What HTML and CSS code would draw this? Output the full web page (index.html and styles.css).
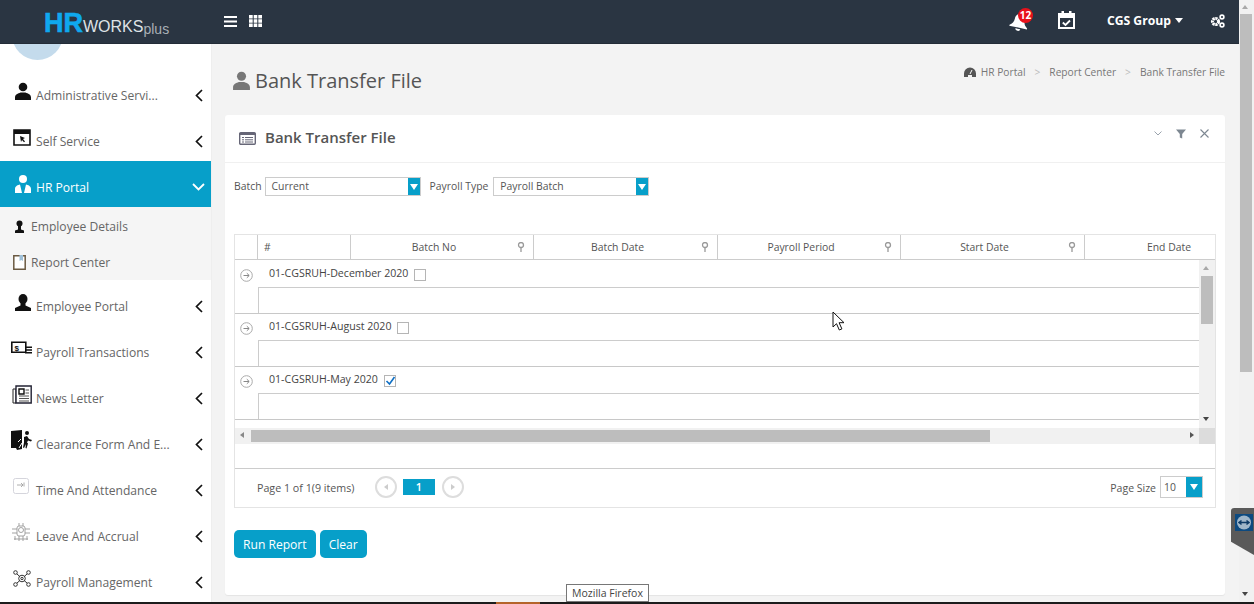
FILE: index.html
```html
<!DOCTYPE html>
<html lang="en">
<head>
    <meta charset="UTF-8">
    <meta name="viewport" content="width=device-width, initial-scale=1.0">
    <title>Bank Transfer File</title>
    <link rel="stylesheet" href="styles.css">
</head>
<body>
<svg class="defs" width="0" height="0">
    <symbol id="chev-left" viewBox="0 0 8 13"><path d="M7 1 1.5 6.5 7 12" fill="none" stroke="currentColor" stroke-width="1.7"/></symbol>
    <symbol id="person" viewBox="0 0 16 18"><circle cx="8" cy="5" r="4.3"/><path d="M0 18v-2.500c0-3 3-4 5.500-5h5c2.500 1 5.500 2 5.500 5V18z"/></symbol>
    <symbol id="pin" viewBox="0 0 8 10"><circle cx="4" cy="3" r="2.5" fill="none" stroke="currentColor" stroke-width="1.3"/><path d="M4 5.500V10" stroke="currentColor" stroke-width="1.3"/></symbol>
    <symbol id="expand" viewBox="0 0 13 13"><circle cx="6.5" cy="6.5" r="5.8" fill="none" stroke="#aaa" stroke-width="1"/><path d="M3.500 6.500h5.500M6.800 4.200l2.400 2.300-2.400 2.300" fill="none" stroke="#888" stroke-width="1"/></symbol>
    <symbol id="funnel" viewBox="0 0 10 10"><path d="M0 .5h10L6.200 5v4.500l-2.400-1V5z"/></symbol>
</svg>

<div class="shell">
    <div class="app">
        <header class="topbar">
            <div class="logo"><span class="logo-hr">HR</span><span class="logo-works">WORKS</span><span class="logo-plus">plus</span></div>
            <svg class="top-icon" width="13" height="11" viewBox="0 0 13 11"><path d="M0 1h13M0 5.500h13M0 10h13" stroke="#fff" stroke-width="2"/></svg>
            <svg class="top-icon grid-icon" width="13" height="12" viewBox="0 0 13 12" fill="#fff"><path d="M0 0h3.700v3.500H0zM4.700 0h3.600v3.500H4.700zM9.300 0H13v3.500H9.300zM0 4.300h3.700v3.400H0zM4.700 4.300h3.600v3.400H4.700zM9.300 4.300H13v3.400H9.300zM0 8.500h3.700V12H0zM4.700 8.500h3.600V12H4.700zM9.300 8.500H13V12H9.300z"/></svg>
            <div class="top-right">
                <div class="bell">
                    <svg width="21" height="20" viewBox="0 0 20 20" fill="#fff"><path transform="rotate(12 10 10)" d="M10 3c-3.500 0-5 2.800-5 5.500 0 3.500-1.500 5.500-4 7.200v1h18v-1c-2.500-1.700-4-3.700-4-7.200C15 5.800 13.500 3 10 3zM7.500 18a2.500 2 0 0 0 5 0z"/></svg>
                    <span class="badge">12</span>
                </div>
                <svg class="calendar" width="17" height="18" viewBox="0 0 17 18"><path d="M1 3h15v14H1z" fill="none" stroke="#fff" stroke-width="2"/><path d="M1 3h15v4H1zM3.500 0h2.500v4H3.500zM11 0h2.500v4H11z" fill="#fff"/><path d="m4.800 11.500 2.700 2.500 4.500-4.500" fill="none" stroke="#fff" stroke-width="1.8"/></svg>
                <span class="org">CGS Group<i class="caret"></i></span>
                <svg class="gears" width="15" height="14" viewBox="0 0 15 14"><circle cx="5.5" cy="7.5" r="3.1" fill="none" stroke="#fff" stroke-width="3" stroke-dasharray="2.2 .6"/><circle cx="12" cy="3" r="1.9" fill="none" stroke="#fff" stroke-width="1.6"/><circle cx="12" cy="11" r="1.9" fill="none" stroke="#fff" stroke-width="1.6"/></svg>
            </div>
        </header>

        <div class="body-row">
            <nav class="sidebar">
                <div class="avatar-clip"><div class="avatar"></div></div>
                <a class="nav-item">
                    <svg class="nav-icon" width="16" height="18" fill="#111"><use href="#person"/></svg>
                    <span class="nav-text">Administrative Servi...</span>
                    <svg class="chev" width="8" height="13"><use href="#chev-left"/></svg>
                </a>
                <a class="nav-item">
                    <svg class="nav-icon shift-2" width="18" height="17" viewBox="0 0 18 17"><path d="M1 1h16v15H1z" fill="#fff" stroke="#111" stroke-width="1.6"/><path d="M1 1h16v4H1z" fill="#111"/><path d="m7 7 5 2-2 1 2 2.500-1 .8L9 11l-1 2z" fill="#111"/></svg>
                    <span class="nav-text">Self Service</span>
                    <svg class="chev" width="8" height="13"><use href="#chev-left"/></svg>
                </a>
                <a class="nav-item active">
                    <svg class="nav-icon" width="16" height="19" viewBox="0 0 16 19" fill="#fff"><circle cx="8" cy="5" r="4"/><path d="M0 19v-4c0-3 3-4 5-4.500L7 19zM16 19v-4c0-3-3-4-5-4.500L9 19z"/></svg>
                    <span class="nav-text">HR Portal</span>
                    <svg class="chev-down" width="13" height="8" viewBox="0 0 13 8"><path d="m1 1 5.500 5.500L12 1" fill="none" stroke="#fff" stroke-width="1.8"/></svg>
                </a>
                <div class="sub-nav">
                    <a class="sub-item">
                        <svg class="sub-icon" width="10" height="13" viewBox="0 0 10 13" fill="#111"><circle cx="5" cy="3.5" r="3"/><path d="M3.500 6h3v3.500l3 1V13H.5v-2.500l3-1z"/></svg>
                        <span>Employee Details</span>
                    </a>
                    <a class="sub-item">
                        <svg class="sub-icon" width="13" height="15" viewBox="0 0 13 15"><path d="M.8.800h11.400v13.400H.8z" fill="#fff" stroke="#6b5a42" stroke-width="1.5"/><path d="M6.500 0h3.500v6l-1.700-1-1.800 1z" fill="#9fc0d8"/></svg>
                        <span>Report Center</span>
                    </a>
                </div>
                <a class="nav-item">
                    <svg class="nav-icon" width="16" height="17" viewBox="0 0 16 17" fill="#111"><ellipse cx="8" cy="5" rx="4.5" ry="5"/><path d="M5.500 9h5v2.500l5.500 2.500v3H0v-3l5.500-2.500z"/></svg>
                    <span class="nav-text">Employee Portal</span>
                    <svg class="chev" width="8" height="13"><use href="#chev-left"/></svg>
                </a>
                <a class="nav-item">
                    <svg class="nav-icon shift-4" width="21" height="14" viewBox="0 0 21 13"><path d="M.8.800h14v10H.8z" fill="#fff" stroke="#111" stroke-width="1.6"/><path d="M14 5h7v1.500h-7zM14 7.700h7v1.500h-7zM14 10.400h7V12H14z" fill="#111"/><text x="3.500" y="9" font-size="8" font-weight="700" fill="#111" font-family="Liberation Sans, sans-serif">$</text></svg>
                    <span class="nav-text">Payroll Transactions</span>
                    <svg class="chev" width="8" height="13"><use href="#chev-left"/></svg>
                </a>
                <a class="nav-item">
                    <svg class="nav-icon shift-3" width="20" height="19" viewBox="0 0 20 19"><path d="M1 4h3v14H1z" fill="#fff" stroke="#222" stroke-width="1"/><path d="M4 1h15.200v17H4z" fill="#fff" stroke="#223" stroke-width="1.4"/><path d="M7 4h5v5H7z" fill="none" stroke="#111" stroke-width="1.4"/><path d="M13.500 5H17M13.500 8H17M7 11h10M7 13.500h10M7 16h10" stroke="#555" stroke-width="1.2"/></svg>
                    <span class="nav-text">News Letter</span>
                    <svg class="chev" width="8" height="13"><use href="#chev-left"/></svg>
                </a>
                <a class="nav-item">
                    <svg class="nav-icon shift-4" width="21" height="20" viewBox="0 0 21 20"><path d="M0 1 11 0v19l-5 1-1-2H0z" fill="#111"/><circle cx="16" cy="3" r="2" fill="#111"/><path d="m13 7 3-1 2 3 3 1-1 1.500-3-1-1 2 1 1-1.500 5-1-.5.500-4-2 4-1-.5 1-5z" fill="#111"/><path d="M7 12l3-3M8 18l3-5" stroke="#fff" stroke-width="1"/></svg>
                    <span class="nav-text">Clearance Form And E...</span>
                    <svg class="chev" width="8" height="13"><use href="#chev-left"/></svg>
                </a>
                <a class="nav-item">
                    <svg class="nav-icon shift-2" width="16" height="16" viewBox="0 0 16 16"><rect x=".5" y=".5" width="15" height="15" rx="2" fill="none" stroke="#d5d5dc"/><path d="M4 7h6M8 5l2 2-2 2M11 4.500v4" fill="none" stroke="#999" stroke-width=".8"/></svg>
                    <span class="nav-text">Time And Attendance</span>
                    <svg class="chev" width="8" height="13"><use href="#chev-left"/></svg>
                </a>
                <a class="nav-item">
                    <svg class="nav-icon shift-3" width="18" height="18" viewBox="0 0 18 18" fill="none" stroke="#999" stroke-width=".9"><rect x="5" y="3" width="8" height="10" rx="2"/><circle cx="9" cy="7" r="2.5"/><path d="M7 0v3M11 0v3M0 6h5M13 6h5M0 10h5M13 10h5M3 13v4M7 13v5M11 13v5M15 13v4M2 16h14"/></svg>
                    <span class="nav-text">Leave And Accrual</span>
                    <svg class="chev" width="8" height="13"><use href="#chev-left"/></svg>
                </a>
                <a class="nav-item">
                    <svg class="nav-icon shift-2" width="18" height="17" viewBox="0 0 18 17" fill="none" stroke="#333" stroke-width="1"><circle cx="2.5" cy="2.5" r="1.8"/><circle cx="15.5" cy="2.5" r="1.8"/><circle cx="2.5" cy="14.5" r="1.8"/><circle cx="15.5" cy="14.5" r="1.8"/><circle cx="9" cy="8.5" r="3.3"/><circle cx="9" cy="8.5" r="1.2"/><path d="m4 4 2.700 2.500M14 4l-2.700 2.500M4 13l2.700-2.300M14 13l-2.700-2.300"/></svg>
                    <span class="nav-text">Payroll Management</span>
                    <svg class="chev" width="8" height="13"><use href="#chev-left"/></svg>
                </a>
            </nav>

            <main class="content">
                <div class="page-head">
                    <h1 class="page-title">
                        <svg width="17" height="19" fill="#777"><use href="#person"/></svg>
                        Bank Transfer File
                    </h1>
                    <div class="breadcrumb">
                        <svg width="12" height="10" viewBox="0 0 12 10"><path d="M0 10V6.500a6 6 0 0 1 12 0V10H8V8H4v2z" fill="#555"/><path d="M6 7 8 3" stroke="#fff" stroke-width="1"/></svg>
                        <span>HR Portal</span><i>&gt;</i><span>Report Center</span><i>&gt;</i><span>Bank Transfer File</span>
                    </div>
                </div>

                <section class="card">
                    <div class="card-head">
                        <svg width="17" height="13" viewBox="0 0 17 13"><rect x=".7" y=".7" width="15.6" height="11.6" rx="1" fill="#fff" stroke="#667" stroke-width="1.4"/><path d="M.7 1h15.600v2H.7z" fill="#667"/><path d="M3 5.500h2M6 5.500h8M3 7.800h2M6 7.800h8M3 10h2M6 10h8" stroke="#667" stroke-width="1"/></svg>
                        <h2>Bank Transfer File</h2>
                        <div class="card-tools">
                            <svg width="8" height="5" viewBox="0 0 8 5"><path d="m.5.500 3.500 3.500L7.500.5" fill="none" stroke="#9aa3ad" stroke-width="1"/></svg>
                            <svg width="10" height="10" fill="#7d8791"><use href="#funnel"/></svg>
                            <svg width="9" height="9" viewBox="0 0 9 9"><path d="m.5.500 8 8M8.500.5l-8 8" stroke="#7d8791" stroke-width="1.1"/></svg>
                        </div>
                    </div>

                    <div class="card-body">
                        <div class="filters">
                            <label>Batch</label>
                            <div class="combo"><span>Current</span><b class="combo-btn"></b></div>
                            <label class="second">Payroll Type</label>
                            <div class="combo"><span>Payroll Batch</span><b class="combo-btn"></b></div>
                        </div>

                        <div class="grid">
                            <div class="grid-header">
                                <div class="th"></div>
                                <div class="th th-num">#</div>
                                <div class="th">Batch No<svg class="pin" width="8" height="10"><use href="#pin"/></svg></div>
                                <div class="th">Batch Date<svg class="pin" width="8" height="10"><use href="#pin"/></svg></div>
                                <div class="th">Payroll Period<svg class="pin" width="8" height="10"><use href="#pin"/></svg></div>
                                <div class="th">Start Date<svg class="pin" width="8" height="10"><use href="#pin"/></svg></div>
                                <div class="th th-last">End Date</div>
                            </div>

                            <div class="grid-scroll">
                                <div class="grid-rows">
                                    <div class="group">
                                        <div class="group-line">
                                            <svg class="expand" width="13" height="13"><use href="#expand"/></svg>
                                            <span class="group-name">01-CGSRUH-December 2020</span>
                                            <i class="check"></i>
                                        </div>
                                        <div class="group-detail"></div>
                                    </div>
                                    <div class="group">
                                        <div class="group-line">
                                            <svg class="expand" width="13" height="13"><use href="#expand"/></svg>
                                            <span class="group-name">01-CGSRUH-August 2020</span>
                                            <i class="check"></i>
                                        </div>
                                        <div class="group-detail"></div>
                                    </div>
                                    <div class="group">
                                        <div class="group-line">
                                            <svg class="expand" width="13" height="13"><use href="#expand"/></svg>
                                            <span class="group-name">01-CGSRUH-May 2020</span>
                                            <i class="check"><svg width="11" height="10" viewBox="0 0 11 10"><path d="m1.500 5 3 3 5-7" fill="none" stroke="#0e6fc4" stroke-width="1.6"/></svg></i>
                                        </div>
                                        <div class="group-detail"></div>
                                    </div>
                                </div>
                                <div class="v-scroll">
                                    <i class="arrow-up"></i>
                                    <div class="v-thumb"></div>
                                    <i class="arrow-down"></i>
                                </div>
                            </div>

                            <div class="h-scroll-row">
                                <div class="h-scroll">
                                    <i class="arrow-left"></i>
                                    <div class="h-thumb"></div>
                                    <i class="arrow-right"></i>
                                </div>
                                <div class="scroll-corner"></div>
                            </div>

                            <div class="grid-pager">
                                <span class="page-info">Page 1 of 1(9 items)</span>
                                <span class="page-nav"><i class="arrow-left"></i></span>
                                <span class="page-current">1</span>
                                <span class="page-nav"><i class="arrow-right"></i></span>
                                <span class="page-size">Page Size</span>
                                <div class="combo combo-small"><span>10</span><b class="combo-btn"></b></div>
                            </div>
                        </div>

                        <div class="actions">
                            <button class="btn">Run Report</button>
                            <button class="btn">Clear</button>
                        </div>
                    </div>
                </section>
            </main>
        </div>
    </div>

    <div class="page-scroll">
        <i class="arrow-up"></i>
        <div class="page-thumb"></div>
        <i class="arrow-down"></i>
    </div>
</div>

<footer class="taskbar"><i class="task-orange"></i></footer>

<!-- things floating over the page -->
<svg class="cursor" width="14" height="20" viewBox="0 0 14 20"><path d="M1 1v15l3.500-3.300 2.800 6.300 2.600-1.100-2.800-6.200H12z" fill="#fff" stroke="#111" stroke-width="1"/></svg>
<div class="tooltip">Mozilla Firefox</div>
<div class="tv-tab">
    <svg width="18" height="17" viewBox="0 0 18 17"><rect width="18" height="17" fill="#0d4a80"/><circle cx="9" cy="8.5" r="7" fill="#9fb6c9"/><path d="M4 8.500h10M6.500 6.500l-2.500 2 2.500 2M11.500 6.500l2.500 2-2.500 2" fill="none" stroke="#0d3a66" stroke-width="1.5"/></svg>
</div>
</body>
</html>
```

FILE: styles.css
```css
* {
    box-sizing: border-box;
}
html, body {
    height: 100%;
}
body {
    margin: 0;
    display: flex;
    flex-direction: column;
    overflow: hidden;
    font-family: "Open Sans", "Noto Sans", sans-serif;
    font-size: 12px;
    color: #555;
    background: #f3f3f3;
}
.defs {
    position: absolute;
}
.shell {
    flex: 1;
    min-height: 0;
    display: flex;
}
.app {
    flex: 1;
    min-width: 0;
    display: flex;
    flex-direction: column;
}

/* top bar */
.topbar {
    height: 44px;
    flex: none;
    display: flex;
    align-items: center;
    background: #2a3542;
    border-bottom: 1px solid #232c37;
}
.logo {
    width: 224px;
    flex: none;
    padding-left: 44px;
    margin-top: 4px;
    white-space: nowrap;
    font-family: "Liberation Sans", sans-serif;
}
.logo-hr {
    font-size: 27px;
    font-weight: 700;
    color: #0fa8ee;
    -webkit-text-stroke: .6px #0fa8ee;
}
.logo-works {
    font-size: 16px;
    color: #dfe3e6;
}
.logo-plus {
    font-size: 14px;
    color: #a9b0b6;
    position: relative;
    top: 2px;
}
.top-icon {
    display: block;
    margin-top: -1px;
}
.grid-icon {
    margin-left: 12px;
}
.top-right {
    margin-left: auto;
    display: flex;
    align-items: center;
    padding-right: 14px;
}
.bell {
    position: relative;
    width: 24px;
    height: 20px;
    margin-top: -1px;
}
.badge {
    position: absolute;
    left: 9px;
    top: -3px;
    width: 15px;
    height: 15px;
    border-radius: 50%;
    background: #e8111a;
    color: #fff;
    font-size: 10px;
    font-weight: 700;
    line-height: 15px;
    text-align: center;
}
.calendar {
    margin-left: 25px;
    margin-top: -4px;
}
.org {
    margin-left: 32px;
    margin-top: -2px;
    font-size: 12.2px;
    font-weight: 700;
    color: #fff;
    white-space: nowrap;
}
.caret {
    display: inline-block;
    margin-left: 4px;
    vertical-align: 2px;
    border: 4px solid transparent;
    border-top: 5px solid #fff;
    border-bottom: 0;
}
.gears {
    margin-left: 27px;
    margin-top: -2px;
}

.body-row {
    flex: 1;
    min-height: 0;
    display: flex;
}

/* sidebar */
.sidebar {
    width: 211px;
    flex: none;
    overflow: hidden;
    background: #fff;
}
.avatar-clip {
    height: 25px;
    overflow: hidden;
}
.avatar {
    width: 51px;
    height: 51px;
    margin: -35px 0 0 12px;
    border-radius: 50%;
    background: #c4dbec;
}
.nav-item {
    height: 46px;
    display: grid;
    grid-template-columns: 21px 1fr auto;
    align-items: center;
    padding: 6px 8px 0 15px;
    font-size: 12.1px;
    color: #666;
}
.nav-icon {
    margin-top: -8px;
    overflow: visible;
}
.shift-2 {
    margin-left: -2px;
}
.shift-3 {
    margin-left: -3px;
}
.shift-4 {
    margin-left: -4px;
}
.nav-text {
    white-space: nowrap;
}
.chev {
    color: #111;
}
.chev-down {
    margin-right: -2px;
}
.nav-item.active {
    background: #079fc9;
    color: #fff;
}
.sub-nav {
    height: 73px;
    padding-top: 1px;
    background: #f5f5f5;
}
.sub-item {
    height: 36px;
    display: flex;
    align-items: center;
    gap: 5px;
    padding-left: 13px;
    font-size: 12.1px;
    color: #666;
}
.sub-icon {
    width: 13px;
    flex: none;
}

/* main column */
.content {
    flex: 1;
    min-width: 0;
    padding: 0 14px;
    overflow: hidden;
    background: #f3f3f3;
    box-shadow: inset 1px 0 0 #eee;
}
.page-head {
    height: 71px;
    display: flex;
    justify-content: space-between;
}
.page-title {
    margin: 24px 0 0 8px;
    display: flex;
    align-items: center;
    gap: 5px;
    height: 24px;
    font-size: 20px;
    font-weight: 400;
    color: #555;
}
.breadcrumb {
    margin-top: 20px;
    display: flex;
    align-items: center;
    height: 16px;
    font-size: 10.2px;
    color: #777;
}
.breadcrumb svg {
    margin-right: 5px;
}
.breadcrumb i {
    margin: 0 9px;
    font-style: normal;
    color: #bbb;
}

.card {
    height: 480px;
    background: #fff;
    border-radius: 3px;
    box-shadow: 0 1px 1px #e4e4e4;
}
.card-head {
    height: 48px;
    display: flex;
    align-items: center;
    padding: 0 16px 0 14px;
    border-bottom: 1px solid #f0f0f0;
}
.card-head h2 {
    margin: -4px 0 0 9px;
    font-size: 15px;
    font-weight: 600;
    color: #555;
}
.card-tools {
    margin-left: auto;
    margin-top: -10px;
    display: flex;
    align-items: center;
    gap: 14px;
}
.card-body {
    padding: 14px 9px 0;
}

.filters {
    display: flex;
    align-items: center;
    height: 19px;
    font-size: 10.4px;
}
.filters label {
    margin-right: 3px;
    padding-bottom: 1px;
}
.filters .second {
    margin: 0 5px 0 9px;
}
.combo {
    width: 156px;
    height: 19px;
    display: flex;
    align-items: center;
    justify-content: space-between;
    padding-left: 6px;
    border: 1px solid #ccc;
    background: #fff;
    font-size: 10.4px;
}
.combo span {
    padding-bottom: 1px;
}
.combo-btn {
    width: 12px;
    height: 17px;
    display: flex;
    align-items: center;
    justify-content: center;
    background: #079fc9;
}
.combo-btn::after {
    content: "";
    border: 4px solid transparent;
    border-top: 6px solid #fff;
    border-bottom: 0;
}

/* grid */
.grid {
    margin-top: 38px;
    width: 982px;
    border: 1px solid #ccc;
    outline: 1px solid #e4e4e4;
    outline-offset: -1px;
}
.grid-header {
    height: 25px;
    display: grid;
    grid-template-columns: 23px 93px 183px 184px 183px 184px 184px;
    overflow: hidden;
    border-bottom: 1px solid #ccc;
    font-size: 10.4px;
}
.th {
    position: relative;
    display: flex;
    align-items: center;
    justify-content: center;
    padding: 0 16px 1px 0;
    border-right: 1px solid #ccc;
    color: #555;
}
.th-num {
    justify-content: flex-start;
    padding-left: 6px;
}
.th-last {
    border-right: 0;
}
.pin {
    position: absolute;
    right: 8px;
    top: 7px;
    color: #999;
}
.grid-scroll {
    height: 168px;
    display: flex;
}
.grid-rows {
    flex: 1;
    min-width: 0;
    padding-top: 1px;
}
.group {
    height: 53px;
    border-bottom: 1px solid #c8c8c8;
}
.group-line {
    height: 26px;
    display: flex;
    align-items: center;
    padding-bottom: 1px;
    font-size: 10.6px;
    color: #444;
}
.expand {
    flex: none;
    margin: 3px 6px 0 5px;
}
.group-name {
    margin-left: 10px;
    margin-top: -1px;
    white-space: nowrap;
}
.check {
    width: 12px;
    height: 12px;
    margin: 2px 0 0 6px;
    border: 1px solid #b5b5b5;
    background: #fff;
    display: block;
}
.check svg {
    display: block;
}
.group-detail {
    height: 26px;
    margin-left: 23px;
    border-top: 1px solid #ccc;
    border-left: 1px solid #ccc;
}
.v-scroll {
    width: 16px;
    flex: none;
    position: relative;
    background: #f1f1f1;
}
.v-thumb {
    position: absolute;
    left: 2px;
    top: 16px;
    width: 12px;
    height: 48px;
    background: #bdbdbd;
}
.arrow-up, .arrow-down, .arrow-left, .arrow-right {
    display: block;
    width: 0;
    height: 0;
    border: 3.5px solid transparent;
}
.arrow-up {
    border-bottom: 4px solid #a8a8a8;
    border-top: 0;
}
.arrow-down {
    border-top: 4px solid #444;
    border-bottom: 0;
}
.arrow-left {
    border-right: 4px solid #888;
    border-left: 0;
}
.arrow-right {
    border-left: 4px solid #555;
    border-right: 0;
}
.v-scroll .arrow-up {
    position: absolute;
    left: 4px;
    top: 6px;
}
.v-scroll .arrow-down {
    position: absolute;
    left: 4px;
    top: 157px;
}
.h-scroll-row {
    height: 16px;
    display: flex;
}
.h-scroll {
    flex: 1;
    position: relative;
    background: #f1f1f1;
}
.h-thumb {
    position: absolute;
    left: 16px;
    top: 2px;
    width: 739px;
    height: 12px;
    background: #bdbdbd;
}
.h-scroll .arrow-left {
    position: absolute;
    left: 5px;
    top: 4px;
}
.h-scroll .arrow-right {
    position: absolute;
    right: 5px;
    top: 4px;
}
.scroll-corner {
    width: 16px;
    background: #dcdcdc;
}
.grid-pager {
    margin-top: 24px;
    height: 39px;
    display: flex;
    align-items: center;
    padding: 0 12px 2px 22px;
    border-top: 1px solid #ccc;
    font-size: 10.5px;
}
.page-info {
    width: 118px;
    margin-top: 2px;
    font-size: 10.7px;
    white-space: nowrap;
}
.page-nav {
    width: 22px;
    height: 22px;
    display: flex;
    align-items: center;
    justify-content: center;
    border: 2px solid #ddd;
    border-radius: 50%;
}
.page-nav .arrow-left {
    border-right-color: #ccc;
}
.page-nav .arrow-right {
    border-left-color: #ccc;
}
.page-current {
    width: 32px;
    height: 16px;
    margin: 0 7px 0 6px;
    background: #079fc9;
    color: #fff;
    font-size: 11px;
    font-weight: 600;
    line-height: 16px;
    text-align: center;
}
.page-size {
    margin-left: auto;
    margin-right: 4px;
    margin-top: 2px;
}
.combo-small {
    width: 43px;
    height: 22px;
    padding-left: 3px;
}
.combo-small .combo-btn {
    width: 16px;
    height: 20px;
}

.actions {
    margin-top: 22px;
    display: flex;
    gap: 4px;
}
.btn {
    height: 28px;
    padding: 0 9px;
    border: 0;
    border-radius: 5px;
    background: #079fc9;
    color: #fff;
    font-family: inherit;
    font-size: 12.1px;
}

/* browser scrollbar and taskbar */
.page-scroll {
    width: 15px;
    flex: none;
    position: relative;
    background: #f1f1f1;
}
.page-thumb {
    position: absolute;
    left: 1px;
    top: 14px;
    width: 12px;
    height: 358px;
    background: #bdbdbd;
}
.page-scroll .arrow-up {
    position: absolute;
    left: 3px;
    top: 5px;
}
.page-scroll .arrow-down {
    position: absolute;
    left: 3px;
    top: 592px;
}
.taskbar {
    height: 2px;
    flex: none;
    background: #1c1c1c;
}
.task-orange {
    display: block;
    width: 44px;
    height: 2px;
    margin-left: 496px;
    background: #b5642a;
}

/* overlays */
.cursor {
    position: absolute;
    left: 832px;
    top: 311px;
}
.tooltip {
    position: absolute;
    left: 566px;
    top: 584px;
    width: 83px;
    height: 18px;
    border: 1px solid #777;
    background: #fff;
    color: #444;
    font-size: 10.5px;
    line-height: 16px;
    text-align: center;
}
.tv-tab {
    position: absolute;
    left: 1231px;
    top: 508px;
    width: 23px;
    height: 47px;
    padding: 6px 0 0 4px;
    background: #5a5a5a;
    border-radius: 3px 0 0 0;
    clip-path: polygon(0 0, 100% 0, 100% 100%, 0 72%);
}
.tv-tab svg {
    display: block;
}
```
